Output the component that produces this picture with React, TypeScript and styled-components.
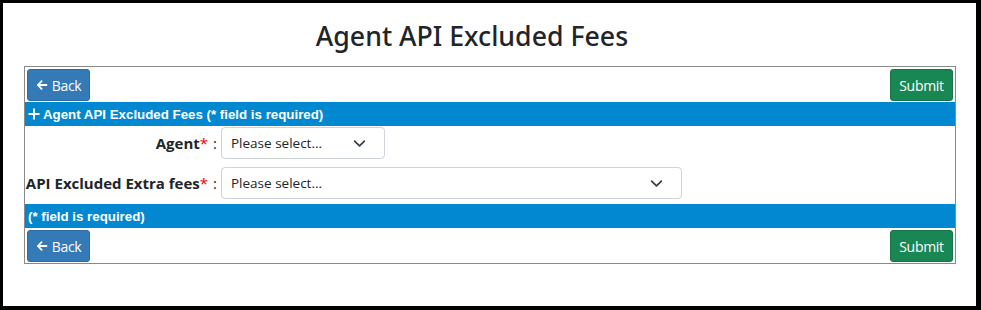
import { createGlobalStyle, styled } from "styled-components";

const GlobalStyle = createGlobalStyle`
  html, body {
    margin: 0;
    padding: 0;
    background: #000;
  }
  * {
    box-sizing: border-box;
  }
`;

const Frame = styled.div`
  width: 981px;
  height: 310px;
  background: #fff;
  border-style: solid;
  border-color: #000;
  border-width: 3px 5px 4px 3px;
  padding: 0 21px 0 21px;
  font-family: "Open Sans", "Noto Sans", sans-serif;
  color: #212529;
`;

const Title = styled.h1`
  margin: 0;
  padding: 14px 35px 0 0;
  height: 63px;
  text-align: center;
  font-family: "Noto Sans", "Open Sans", sans-serif;
  font-size: 26.7px;
  font-weight: 500;
  line-height: 38px;
  color: #212529;
`;

const Panel = styled.div`
  width: 932px;
  border: 1px solid #8a8a8a;
`;

const ButtonRow = styled.div`
  display: flex;
  justify-content: space-between;
  padding: 2px 2px 1px 2px;
`;

const Button = styled.button<{ $variant: "back" | "submit" }>`
  display: inline-flex;
  align-items: center;
  justify-content: center;
  gap: 4px;
  width: 63px;
  height: 32px;
  padding: 0;
  border: 1px solid ${(p) => (p.$variant === "back" ? "#2e6da4" : "#157347")};
  border-radius: 3px;
  background: ${(p) => (p.$variant === "back" ? "#337ab7" : "#198754")};
  color: #fff;
  font-family: "Open Sans", "Noto Sans", sans-serif;
  font-size: 14px;
  letter-spacing: -0.3px;
  cursor: pointer;
`;

const Bar = styled.div`
  display: flex;
  align-items: center;
  gap: 3px;
  height: 24px;
  padding-left: 3px;
  background: #0288d1;
  color: #fff;
  font-family: "Liberation Sans", Arial, sans-serif;
  font-weight: 700;
  font-size: 13.3px;
`;

const Form = styled.div`
  display: flex;
  flex-direction: column;
  gap: 8px;
  padding: 1px 0 5px 0;
`;

const Row = styled.div`
  display: grid;
  grid-template-columns: 196px 1fr;
  align-items: center;
`;

const Label = styled.label`
  text-align: right;
  font-size: 15px;
  font-weight: 700;
  padding-right: 4px;
  white-space: nowrap;
  color: #212529;
`;

const Star = styled.span`
  color: #e00;
  font-weight: 400;
`;

const Colon = styled.span`
  font-weight: 400;
  margin-left: 5px;
`;

const Select = styled.div<{ $width: number }>`
  display: flex;
  align-items: center;
  justify-content: space-between;
  width: ${(p) => p.$width}px;
  height: 32px;
  padding: 0 18px 0 9px;
  border: 1px solid #ced4da;
  border-radius: 4px;
  background: #fff;
  font-size: 13.5px;
  color: #212529;
`;

const Arrow = () => (
  <svg width="12" height="12" viewBox="0 0 16 16" fill="none">
    <path d="M3 8h11" stroke="#fff" strokeWidth="2.4" strokeLinecap="round" />
    <path d="M7.5 2.8L2.5 8l5 5.2" stroke="#fff" strokeWidth="2.4" strokeLinecap="round" strokeLinejoin="round" />
  </svg>
);

const Chevron = () => (
  <svg width="13" height="13" viewBox="0 0 16 16" fill="none">
    <path d="M2 5l6 6 6-6" stroke="#343a40" strokeWidth="2" strokeLinecap="round" strokeLinejoin="round" />
  </svg>
);

const Plus = () => (
  <svg width="12" height="12" viewBox="0 0 12 12">
    <path d="M6 0.5v11M0.5 6h11" stroke="#fff" strokeWidth="2" />
  </svg>
);

export default function App() {
  return (
    <>
      <GlobalStyle />
      <Frame>
        <Title>Agent API Excluded Fees</Title>
        <Panel>
          <ButtonRow>
            <Button $variant="back">
              <Arrow />
              Back
            </Button>
            <Button $variant="submit">Submit</Button>
          </ButtonRow>
          <Bar>
            <Plus />
            Agent API Excluded Fees (* field is required)
          </Bar>
          <Form>
            <Row>
              <Label>
                Agent<Star>*</Star>
                <Colon>:</Colon>
              </Label>
              <Select $width={164}>
                Please select...
                <Chevron />
              </Select>
            </Row>
            <Row>
              <Label>
                API Excluded Extra fees<Star>*</Star>
                <Colon>:</Colon>
              </Label>
              <Select $width={461}>
                Please select...
                <Chevron />
              </Select>
            </Row>
          </Form>
          <Bar>(* field is required)</Bar>
          <ButtonRow>
            <Button $variant="back">
              <Arrow />
              Back
            </Button>
            <Button $variant="submit">Submit</Button>
          </ButtonRow>
        </Panel>
      </Frame>
    </>
  );
}
